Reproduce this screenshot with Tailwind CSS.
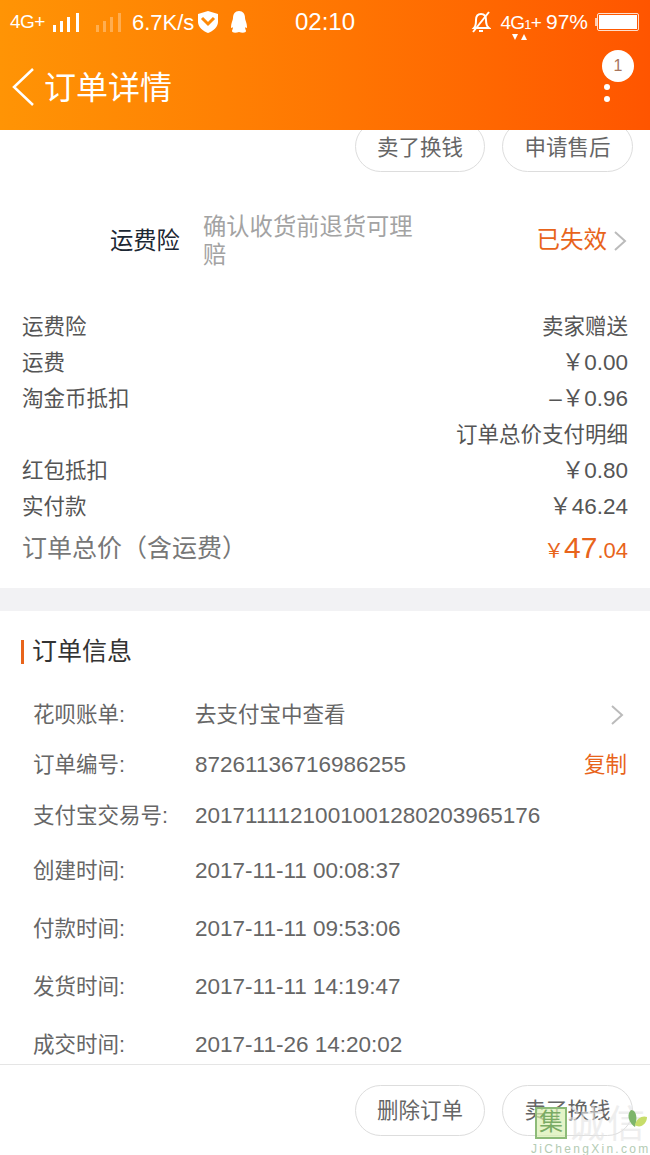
<!DOCTYPE html>
<html lang="zh-CN">
<head>
  <meta charset="UTF-8" />
  <title>订单详情</title>
  <script src="https://cdn.jsdelivr.net/npm/@tailwindcss/browser@4"></script>
</head>
<body class="bg-white">
<div class="relative w-[650px] h-[1155px] overflow-hidden flex flex-col bg-white text-[#555] font-['Liberation_Sans','Noto_Sans_CJK_SC',sans-serif]">

  <!-- Header -->
  <header class="h-[130px] shrink-0 flex flex-col text-white bg-gradient-to-r from-[#ff9405] to-[#ff5500]">
    <div class="h-[44px] flex items-center pl-[10px] pr-[11px] relative">
      <span class="text-[19px] tracking-[-0.5px]">4G+</span>
      <svg class="ml-[8px]" width="27" height="20" viewBox="0 0 27 20" fill="#fff"><rect x="0" y="13" width="3" height="7"/><rect x="7" y="9" width="3" height="11"/><rect x="14" y="5" width="3" height="15"/><rect x="23" y="1" width="3" height="19"/></svg>
      <svg class="ml-[16px]" width="26" height="20" viewBox="0 0 26 20" fill="#fff" opacity=".3"><rect x="0" y="13" width="3" height="7"/><rect x="7" y="9" width="3" height="11"/><rect x="14" y="5" width="3" height="15"/><rect x="22" y="1" width="3" height="19"/></svg>
      <span class="ml-[10px] text-[22px]">6.7K/s</span>
      <svg class="ml-[3px]" width="22" height="24" viewBox="0 0 22 24"><path d="M11 1 L21 4 V12 C21 17 16 21 11 23 C6 21 1 17 1 12 V4 Z" fill="#fff"/><path d="M5 8 L11 14 L17 8" stroke="#ff8a05" stroke-width="3" fill="none"/></svg>
      <svg class="ml-[11px]" width="18" height="24" viewBox="0 0 18 24" fill="#fff"><path d="M9 1 C13 1 15 4 15 8 C15 10 17 13 17 17 C17 19 15 17 15 17 C15 19 16 20 16 21 C16 23 12 23 9 22 C6 23 2 23 2 21 C2 20 3 19 3 17 C3 17 1 19 1 17 C1 13 3 10 3 8 C3 4 5 1 9 1 Z"/></svg>
      <span class="absolute left-[295px] text-[24px]">02:10</span>
      <div class="ml-auto flex items-center">
        <svg width="20" height="24" viewBox="0 0 20 24" fill="none" stroke="#fff" stroke-width="2"><path d="M3 18 C5 16 5 13 5 10 C5 6 7 4 10 4 C13 4 15 6 15 10 C15 13 15 16 18 18 Z"/><path d="M8 21 H12"/><path d="M2 22 L18 2"/></svg>
        <span class="ml-[9px] text-[19px] tracking-[-0.8px] leading-none relative">4G<span class="text-[13px]">1</span>+<svg class="absolute left-[12px] top-[21px]" width="16" height="7" viewBox="0 0 16 7" fill="#fff"><path d="M0 0 H6 L3 6 Z"/><path d="M9 6 H15 L12 0 Z"/></svg></span>
        <span class="ml-[5px] text-[21px]">97%</span>
        <div class="ml-[7px] w-[2px] h-[8px] bg-white/70"></div>
        <div class="w-[42px] h-[18px] border border-white/80 p-[1px] rounded-[2px]"><div class="w-full h-full bg-white"></div></div>
      </div>
    </div>
    <div class="flex-1 flex items-center pl-[12px] pr-[16px] relative">
      <svg width="22" height="38" viewBox="0 0 22 38" fill="none" stroke="#fff" stroke-width="2.500"><path d="M21 1 L2 19 L21 37"/></svg>
      <span class="ml-[10px] text-[32px] leading-none tracking-[0px] mt-[1px]">订单详情</span>
      <div class="absolute right-[16px] top-[6px] w-[32px] flex flex-col items-center">
        <div class="w-[32px] h-[32px] rounded-full bg-white text-[#a8755c] text-[16px] flex items-center justify-center">1</div>
        <div class="w-[6px] h-[6px] rounded-full bg-white mt-[2px] mr-[22px]"></div>
        <div class="w-[6px] h-[6px] rounded-full bg-white mt-[6px] mr-[22px]"></div>
      </div>
    </div>
  </header>

  <!-- Scrolling content -->
  <main class="h-[934px] shrink-0 overflow-hidden">
    <div class="-mt-[9px] flex justify-end gap-[17px] pr-[17px]">
      <button class="w-[130px] h-[51px] pt-[3px] rounded-full border border-[#ddd] text-[21.500px] text-[#666]">卖了换钱</button>
      <button class="w-[131px] h-[51px] pt-[3px] rounded-full border border-[#ddd] text-[21.500px] text-[#666]">申请售后</button>
    </div>

    <section class="mt-[38px] h-[62px] flex items-center pl-[110px] pr-[23px]">
      <span class="w-[93px] text-[23.300px] text-[#1c2733]">运费险</span>
      <span class="w-[214px] text-[23.300px] leading-[28px] text-[#a3a3a3]">确认收货前退货可理赔</span>
      <span class="ml-auto text-[23.500px] text-[#e8641b]">已失效</span>
      <svg class="ml-[6px]" width="14" height="22" viewBox="0 0 14 22" fill="none" stroke="#bbb" stroke-width="2"><path d="M2 2 L12 11 L2 20"/></svg>
    </section>

    <section class="mt-[37px] px-[22px] text-[21.500px] text-[#555]">
      <div class="h-[36px] flex items-center justify-between"><span>运费险</span><span>卖家赠送</span></div>
      <div class="h-[36px] flex items-center justify-between"><span>运费</span><span class="text-[22.500px] -mt-[1px]">￥0.00</span></div>
      <div class="h-[36px] flex items-center justify-between"><span>淘金币抵扣</span><span class="text-[22.500px] -mt-[1px]">–￥0.96</span></div>
      <div class="h-[36px] flex items-center justify-end"><span>订单总价支付明细</span></div>
      <div class="h-[36px] flex items-center justify-between"><span>红包抵扣</span><span class="text-[22.500px] -mt-[1px]">￥0.80</span></div>
      <div class="h-[36px] flex items-center justify-between"><span>实付款</span><span class="text-[22.500px] -mt-[1px]">￥46.24</span></div>
      <div class="h-[48px] flex items-center justify-between">
        <span class="text-[25px] text-[#777]">订单总价（含运费）</span>
        <span class="text-[#e8641b] flex items-baseline -mt-[3px]"><span class="text-[20px]">￥</span><span class="text-[30px]">47</span><span class="text-[22px]">.04</span></span>
      </div>
    </section>

    <div class="mt-[15px] h-[23px] bg-[#f2f2f4]"></div>

    <section class="mt-[28px] pl-[21px] pr-[23px]">
      <h2 class="flex items-center text-[25px] leading-none text-[#333]"><span class="w-[3px] h-[24px] bg-[#e8641b] mr-[8px]"></span>订单信息</h2>
      <dl class="mt-[26px] pl-[12px] text-[21.500px] text-[#666]">
        <div class="h-[50px] flex items-center"><dt class="w-[162px]">花呗账单:</dt><dd>去支付宝中查看</dd><svg class="ml-auto mr-[3px]" width="14" height="22" viewBox="0 0 14 22" fill="none" stroke="#bbb" stroke-width="2"><path d="M2 2 L12 11 L2 20"/></svg></div>
        <div class="h-[50px] flex items-center"><dt class="w-[162px]">订单编号:</dt><dd class="text-[22.500px]">87261136716986255</dd><span class="ml-auto text-[#e8641b]">复制</span></div>
        <div class="h-[52px] flex items-center"><dt class="w-[162px]">支付宝交易号:</dt><dd class="text-[22.500px]">2017111121001001280203965176</dd></div>
        <div class="h-[58px] flex items-center"><dt class="w-[162px]">创建时间:</dt><dd class="text-[22.500px]">2017-11-11 00:08:37</dd></div>
        <div class="h-[58px] flex items-center"><dt class="w-[162px]">付款时间:</dt><dd class="text-[22.500px]">2017-11-11 09:53:06</dd></div>
        <div class="h-[58px] flex items-center"><dt class="w-[162px]">发货时间:</dt><dd class="text-[22.500px]">2017-11-11 14:19:47</dd></div>
        <div class="h-[58px] flex items-center"><dt class="w-[162px]">成交时间:</dt><dd class="text-[22.500px]">2017-11-26 14:20:02</dd></div>
      </dl>
    </section>
  </main>

  <!-- Footer -->
  <footer class="flex-1 border-t border-[#e5e5e5] bg-white flex justify-end gap-[17px] pr-[17px] pt-[20px]">
    <button class="w-[130px] h-[51px] pt-[2px] rounded-full border border-[#ddd] text-[21.500px] text-[#666]">删除订单</button>
    <button class="w-[131px] h-[51px] pt-[2px] rounded-full border border-[#ddd] text-[21.500px] text-[#666]">卖了换钱</button>
  </footer>

  <!-- Watermark -->
  <div class="absolute left-[533px] top-[1105px] w-[117px] h-[50px]">
    <div class="absolute left-[2px] top-[2px] w-[32px] h-[32px] bg-[#d8efb0]/70 border-2 border-[#8dbb78] text-[#7aab64] text-[24px] leading-[26px] text-center">集</div>
    <span class="absolute left-[34px] top-[-2px] text-[38px] leading-[42px] tracking-[2px] text-[#e4e4e4]/60 whitespace-nowrap">诚信</span>
    <span class="absolute left-[-2px] top-[35px] text-[12px] tracking-[2.300px] text-[#b4ccb4] whitespace-nowrap">JiChengXin.com</span>
    <svg class="absolute left-[94px] top-[3px]" width="21" height="26" viewBox="0 0 21 24"><path d="M4 1 C9 1 11 8 8 18 C2 14 -1 6 4 1 Z" fill="#7db56b"/><path d="M8 16 C9 9 16 6 20 8 C20 15 13 20 8 16 Z" fill="#c7dd6a"/></svg>
  </div>
</div>
</body>
</html>
